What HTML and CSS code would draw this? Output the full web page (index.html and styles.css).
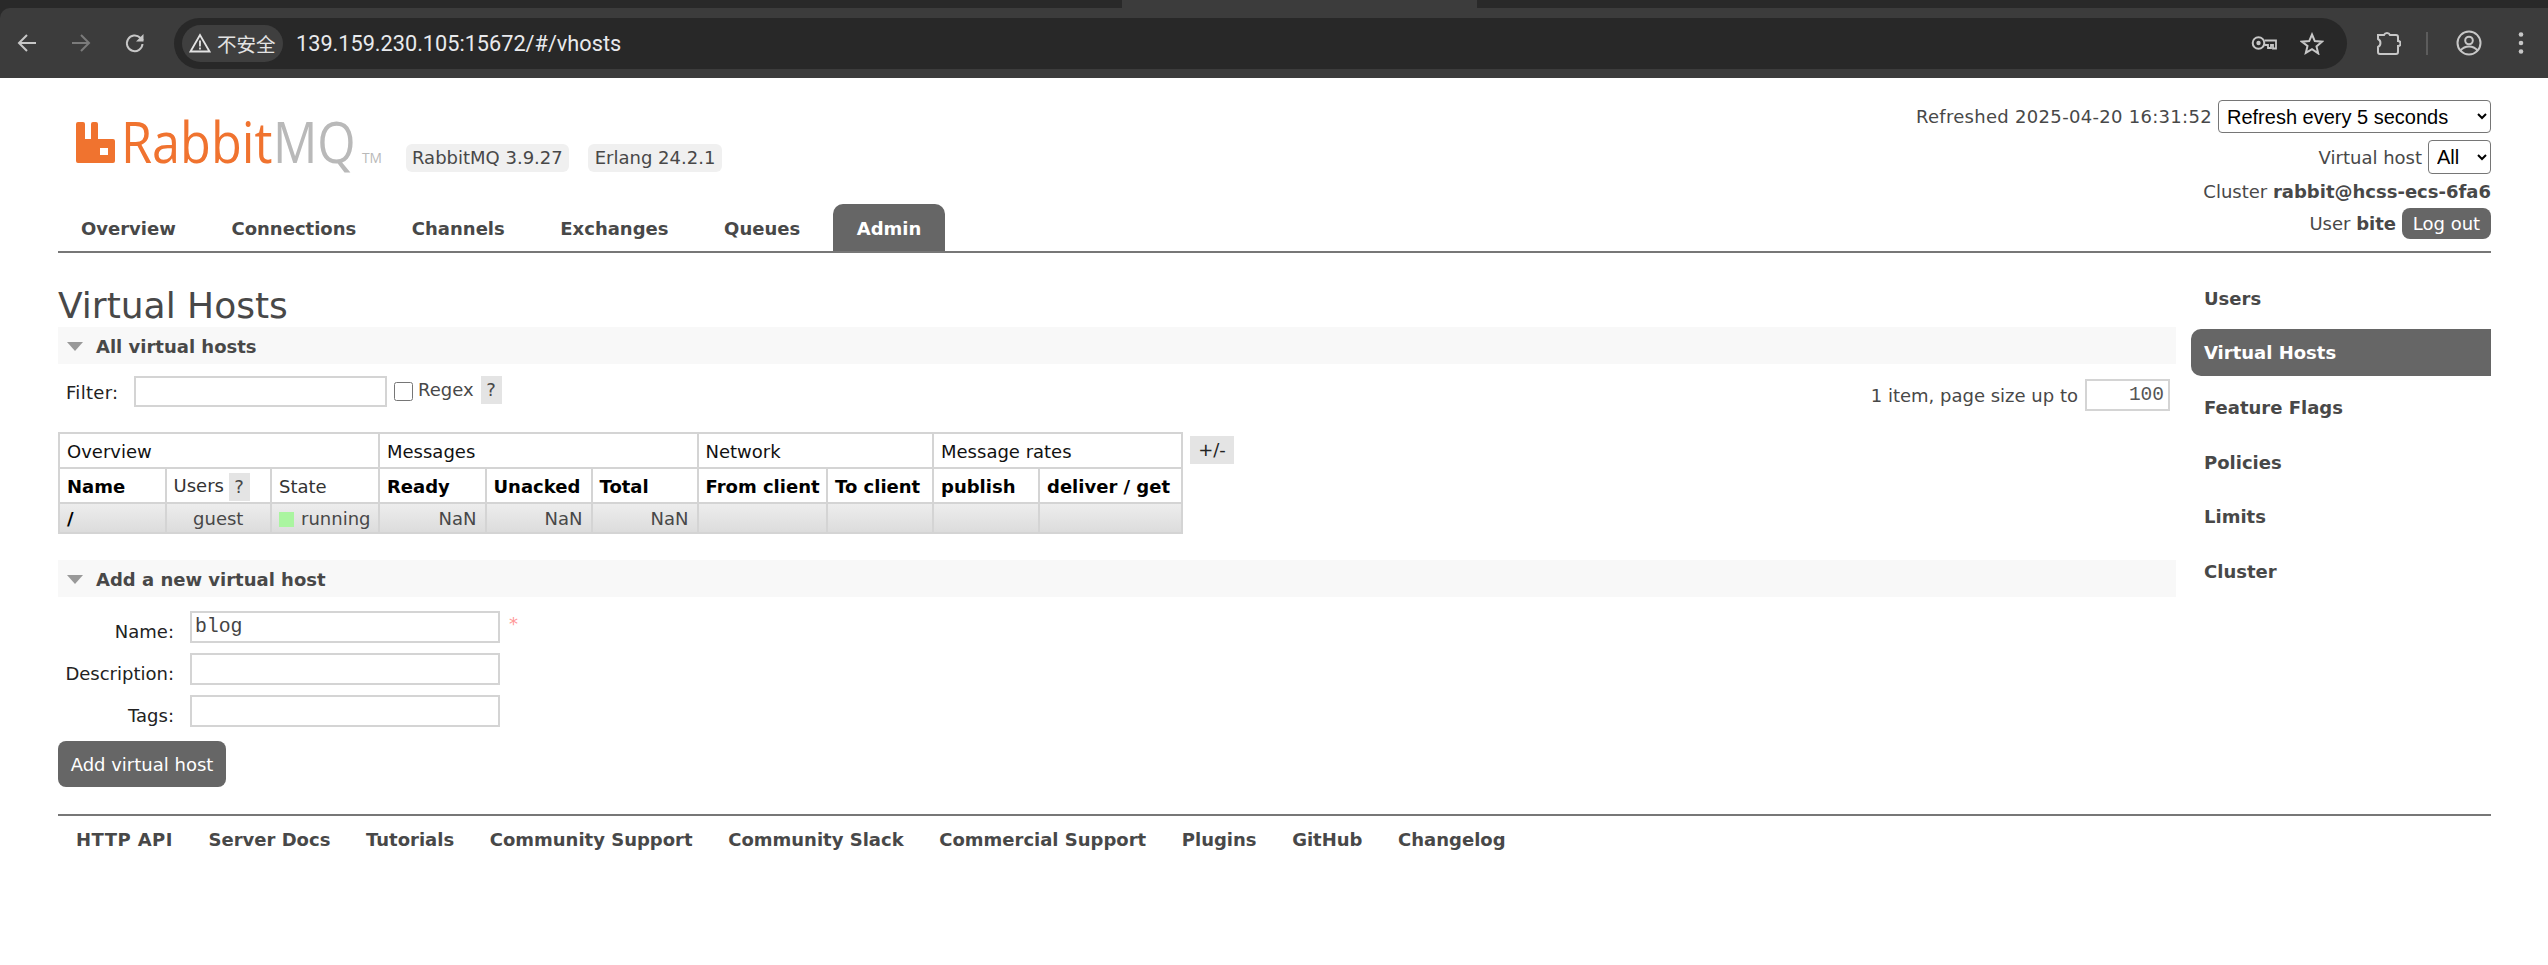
FILE: index.html
```
<!DOCTYPE html>
<html lang="en">
<head>
<meta charset="utf-8">
<title>RabbitMQ Management</title>
<link rel="stylesheet" href="styles.css">
</head>
<body>
<div class="chrome">
  <div class="strip"><span class="strip-tab"></span></div>
  <div class="toolbar">
    <svg class="ci" width="24" height="24" viewBox="0 0 24 24"><path d="M12 4 4 12l8 8M4.500 12H21" fill="none" stroke="#c7c7c7" stroke-width="2"/></svg>
    <svg class="ci ci-fwd" width="24" height="24" viewBox="0 0 24 24"><path d="M12 4l8 8-8 8M19.500 12H3" fill="none" stroke="#7b7b7b" stroke-width="2"/></svg>
    <svg class="ci ci-rel" width="24" height="24" viewBox="0 0 24 24"><path d="M19.500 13a7.800 7.800 0 1 1-2.300-6.200L20 9.500" fill="none" stroke="#c7c7c7" stroke-width="2"/><path d="M20.500 3v7.500H13z" fill="#c7c7c7"/></svg>
    <div class="omni">
      <div class="chip">
        <svg width="22" height="20" viewBox="0 0 22 20"><path d="M11 2 1.500 18.500h19z" fill="none" stroke="#e3e3e3" stroke-width="1.800"/><path d="M11 7.500v6M11 14.500v2" stroke="#e3e3e3" stroke-width="1.800"/></svg>
        <span class="chip-text">不安全</span>
      </div>
      <span class="url">139.159.230.105:15672/#/vhosts</span>
      <svg class="o-key" width="26" height="16" viewBox="0 0 26 16"><circle cx="7.500" cy="8" r="5.800" fill="none" stroke="#c7c7c7" stroke-width="2"/><circle cx="7.500" cy="8" r="2.200" fill="#c7c7c7"/><path d="M13.500 5.500H25v8h-3V10h-2v3h-3v-3h-3.500" fill="none" stroke="#c7c7c7" stroke-width="1.800"/></svg>
      <svg class="o-star" width="24" height="23" viewBox="0 0 24 23"><path d="M12 2.500l2.800 6.600 7.200.6-5.500 4.700 1.700 7L12 17.200l-6.200 3.700 1.700-7L2 9.700l7.200-.6z" fill="none" stroke="#c7c7c7" stroke-width="2"/></svg>
    </div>
    <svg class="t-puzzle" width="26" height="26" viewBox="0 0 26 26"><path d="M3 5h6a3.300 3.300 0 0 1 6 0h6a2 2 0 0 1 2 2v4a2.500 2.500 0 0 1 0 5v6a2 2 0 0 1-2 2H5a2 2 0 0 1-2-2v-5a4.500 4.500 0 0 0 0-8z" fill="none" stroke="#c7c7c7" stroke-width="2"/></svg>
    <span class="t-sep"></span>
    <svg class="t-prof" width="26" height="26" viewBox="0 0 26 26"><circle cx="13" cy="13" r="11.500" fill="none" stroke="#c7c7c7" stroke-width="2"/><circle cx="13" cy="10.500" r="3.800" fill="none" stroke="#c7c7c7" stroke-width="2"/><path d="M4.500 20.500c2.500-3 5.500-4 8.500-4s6 1 8.500 4" fill="none" stroke="#c7c7c7" stroke-width="2"/></svg>
    <svg class="t-dots" width="6" height="24" viewBox="0 0 6 24"><circle cx="3" cy="3.500" r="2.300" fill="#c7c7c7"/><circle cx="3" cy="12" r="2.300" fill="#c7c7c7"/><circle cx="3" cy="20.500" r="2.300" fill="#c7c7c7"/></svg>
  </div>
</div>

<div class="page">
  <header class="head">
    <div class="head-left">
      <div class="brand">
        <svg class="logo" width="310" height="84" viewBox="0 -23 310 84">
          <path d="M0 3a2 2 0 0 1 2-2h5a2 2 0 0 1 2 2v15h6V3a2 2 0 0 1 2-2h3a2 2 0 0 1 2 2v15h15a2 2 0 0 1 2 2v20a2 2 0 0 1-2 2H2a2 2 0 0 1-2-2zM24 27v7h8v-7z" fill="#f0732f" fill-rule="evenodd"/>
          <text class="logo-rabbit" transform="translate(45 42) scale(.9 1)">Rabbit</text>
          <text class="logo-mq" transform="translate(197 42) scale(.88 1)">MQ</text>
          <text class="logo-tm" transform="translate(286 42) scale(.92 1)">TM</text>
        </svg>
        <span class="badge badge-a">RabbitMQ 3.9.27</span>
        <span class="badge badge-b">Erlang 24.2.1</span>
      </div>
      <nav class="tabs">
        <a class="tab">Overview</a>
        <a class="tab">Connections</a>
        <a class="tab">Channels</a>
        <a class="tab">Exchanges</a>
        <a class="tab">Queues</a>
        <a class="tab tab-on">Admin</a>
      </nav>
    </div>
    <div class="head-right">
      <div class="hr-row hr-refresh"><span class="refreshed">Refreshed 2025-04-20 16:31:52</span><select class="sel sel-refresh"><option>Refresh every 5 seconds</option></select></div>
      <div class="hr-row hr-vhost"><span>Virtual host</span><select class="sel sel-vhost"><option>All</option></select></div>
      <div class="hr-row hr-cluster"><span>Cluster <b>rabbit@hcss-ecs-6fa6</b></span></div>
      <div class="hr-row hr-user"><span>User <b>bite</b></span><button class="logout">Log out</button></div>
    </div>
  </header>

  <div class="main">
    <div class="content">
      <h1>Virtual Hosts</h1>
      <h2 class="sec"><span class="tri"></span>All virtual hosts</h2>
      <div class="filter">
        <label class="f-label">Filter:</label>
        <input class="f-input" type="text">
        <input class="f-check" type="checkbox">
        <span class="f-regex">Regex</span>
        <span class="help">?</span>
        <span class="pager">1 item, page size up to</span>
        <input class="page-size" type="text" value="100">
      </div>
      <div class="table-row">
        <table class="list">
          <colgroup>
            <col class="c1"><col class="c2"><col class="c3"><col class="c4"><col class="c5"><col class="c6"><col class="c7"><col class="c8"><col class="c9"><col class="c10">
          </colgroup>
          <tr class="r-group">
            <th colspan="3">Overview</th>
            <th colspan="3">Messages</th>
            <th colspan="2">Network</th>
            <th colspan="2">Message rates</th>
          </tr>
          <tr class="r-head">
            <th>Name</th>
            <th class="plain">Users <span class="help help-sm">?</span></th>
            <th class="plain">State</th>
            <th>Ready</th>
            <th>Unacked</th>
            <th>Total</th>
            <th>From client</th>
            <th>To client</th>
            <th>publish</th>
            <th>deliver / get</th>
          </tr>
          <tr class="r-data">
            <td class="d-name">/</td>
            <td class="d-c">guest</td>
            <td class="d-state"><span class="dot"></span>running</td>
            <td class="d-r">NaN</td>
            <td class="d-r">NaN</td>
            <td class="d-r">NaN</td>
            <td></td><td></td><td></td><td></td>
          </tr>
        </table>
        <span class="plusminus">+/-</span>
      </div>
      <h2 class="sec sec-add"><span class="tri"></span>Add a new virtual host</h2>
      <form class="form">
        <div class="f-row"><label>Name:</label><input class="t-in" type="text" value="blog"><span class="req">*</span></div>
        <div class="f-row"><label>Description:</label><input class="t-in" type="text"></div>
        <div class="f-row"><label>Tags:</label><input class="t-in" type="text"></div>
        <button class="add" type="button">Add virtual host</button>
      </form>
    </div>
    <nav class="side">
      <a class="side-item">Users</a>
      <a class="side-item side-on">Virtual Hosts</a>
      <a class="side-item">Feature Flags</a>
      <a class="side-item">Policies</a>
      <a class="side-item">Limits</a>
      <a class="side-item">Cluster</a>
    </nav>
  </div>

  <footer class="foot">
    <a class="foot-api">HTTP API</a><a>Server Docs</a><a>Tutorials</a><a>Community Support</a><a>Community Slack</a><a>Commercial Support</a><a>Plugins</a><a>GitHub</a><a>Changelog</a>
  </footer>
</div>
</body>
</html>
```
FILE: styles.css
```
* { box-sizing: border-box; }
html, body { margin: 0; padding: 0; background: #fff; }
body { font-family: "DejaVu Sans", Verdana, sans-serif; font-size: 18px; color: #484848; overflow: hidden; width: 2548px; height: 965px; }

/* browser chrome */
.chrome { height: 78px; background: #292929; }
.strip { height: 8px; padding-left: 1122px; }
.strip-tab { display: block; width: 355px; height: 8px; background: #3c3c3c; }
.toolbar { height: 70px; background: #3c3c3c; border-top-left-radius: 10px; display: flex; align-items: center; padding-left: 15px; }
.ci { flex: none; }
.ci-fwd { margin-left: 30px; }
.ci-rel { margin-left: 30px; }
.omni { width: 2173px; margin-left: 27px; height: 51px; border-radius: 26px; background: #282828; display: flex; align-items: center; padding-left: 8px; }
.chip { width: 101px; height: 37px; border-radius: 19px; background: #3f3f3f; display: flex; align-items: center; padding-left: 7px; gap: 6px; }
.chip-text { font-family: "Noto Sans CJK SC", sans-serif; font-size: 19.500px; color: #e3e3e3; white-space: nowrap; }
.url { margin-left: 13px; font-family: Roboto, "Open Sans", sans-serif; font-size: 21.700px; color: #e8eaed; white-space: nowrap; }
.o-key { margin-left: auto; }
.o-star { margin-left: 23px; margin-right: 23px; }
.t-puzzle { margin-left: 28px; }
.t-sep { width: 2px; height: 23px; background: #5c5c5c; margin-left: 25px; }
.t-prof { margin-left: 28px; }
.t-dots { margin-left: 36px; }

/* page */
.page { padding: 0 57px 0 58px; }
.head { height: 175px; border-bottom: 2px solid #777; display: flex; justify-content: space-between; }
.head-left { display: flex; flex-direction: column; justify-content: space-between; }
.brand { display: flex; align-items: flex-start; padding: 20px 0 0 18px; }
.logo { flex: none; display: block; }
.logo-rabbit { font-family: "Open Sans", sans-serif; font-weight: 400; font-size: 56px; fill: #f0732f; }
.logo-mq { font-family: "Open Sans", sans-serif; font-weight: 400; font-size: 56px; fill: #b9b9b9; }
.logo-tm { font-family: "Open Sans", sans-serif; font-size: 15px; fill: #b9b9b9; }
.badge { background: #f0f0f0; border-radius: 6px; height: 28px; line-height: 28px; padding: 0 6px; font-size: 18px; white-space: nowrap; margin-top: 46px; }
.badge-a { margin-left: 20px; }
.badge-b { margin-left: 19px; padding: 0 7px; }
.tabs { display: flex; gap: 9.600px; }
.tab { display: block; height: 47px; line-height: 49px; padding: 0 23px; font-weight: 700; font-size: 18px; color: #484848; }
.tab-on { background: #666; color: #fff; border-radius: 10px 10px 0 0; padding: 0 24px; }

.head-right { padding-top: 22px; }
.hr-row { display: flex; justify-content: flex-end; align-items: center; gap: 6px; white-space: nowrap; font-size: 18px; }
.refreshed { letter-spacing: .3px; }
.hr-refresh { height: 33px; }
.hr-vhost { height: 34px; margin-top: 7px; }
.hr-cluster { margin-top: 6px; height: 22px; }
.hr-user { margin-top: 6px; height: 31px; }
.sel { font-family: "Liberation Sans", Arial, sans-serif; font-size: 20px; height: 100%; background: #fff; color: #000; border: 1px solid #767676; border-radius: 4px; padding: 0 4px; }
.sel-refresh { width: 273px; }
.sel-vhost { width: 63px; }
.logout { width: 89px; height: 31px; border: 0; border-radius: 8px; background: #666; color: #fff; font-family: "DejaVu Sans", sans-serif; font-size: 18px; padding: 0; }

.main { display: flex; gap: 15px; height: 561px; }
.content { width: 2118px; padding-top: 32px; }
h1 { margin: 0; font-size: 36px; font-weight: 400; line-height: 42px; color: #484848; }
.sec { margin: 0; height: 37px; padding-top: 1px; background: #f8f8f8; font-size: 18px; font-weight: 700; color: #484848; display: flex; align-items: center; padding-left: 9px; gap: 13px; }
.sec-add { margin-top: 26px; }
.tri { width: 0; height: 0; border: 8.500px solid transparent; border-top: 9px solid #999; border-bottom: 0; }

.filter { display: flex; align-items: flex-start; height: 68px; padding-top: 12px; padding-left: 8px; }
.f-label { color: #222; line-height: 33px; width: 68px; letter-spacing: .3px; }
.f-input { width: 253px; height: 31px; border: 2px solid #d4d4d4; background: #fff; }
.f-check { width: 19px; height: 19px; margin: 6px 5px 0 7px; }
.f-regex { line-height: 28px; }
.help { width: 21px; height: 28px; line-height: 28px; margin-left: 7px; background: #e4e4e4; text-align: center; font-size: 18px; }
.pager { margin-left: auto; line-height: 33px; margin-right: 7px; margin-top: 3px; }
.page-size { width: 85px; height: 32px; margin-top: 3px; margin-right: 6px; border: 2px solid #d4d4d4; text-align: right; font-family: "Liberation Mono", monospace; font-size: 19.500px; color: #555; padding: 0 4px; }

.table-row { display: flex; align-items: flex-start; gap: 7px; }
.list { border-collapse: collapse; table-layout: fixed; width: 1123px; font-size: 18px; color: #111; }
.list th, .list td { border: 2px solid #d4d4d4; padding: 2px 0 0 7px; text-align: left; white-space: nowrap; overflow: hidden; }
.c1 { width: 106.500px; } .c2 { width: 105.500px; } .c3 { width: 108px; } .c4 { width: 106.500px; } .c5 { width: 106px; }
.c6 { width: 106px; } .c7 { width: 129.500px; } .c8 { width: 106px; } .c9 { width: 106px; } .c10 { width: 143px; }
.r-group { height: 35px; }
.r-group th { font-weight: 400; }
.r-head { height: 35px; }
.r-head th { font-weight: 700; color: #000; }
.r-head th.plain { font-weight: 400; color: #333; }
.help-sm { display: inline-block; height: 28px; vertical-align: middle; margin-left: -1px; color: #484848; }
.r-data { height: 30px; }
.r-data td { background: linear-gradient(#ededed, #dcdcdc); color: #484848; line-height: 26px; }
.d-name { font-weight: 700; color: #000 !important; }
.d-c { text-align: center !important; padding: 2px 0 0 !important; }
.dot { display: inline-block; width: 15px; height: 15px; background: #aaf5a0; margin-right: 7px; vertical-align: -2px; }
.list td.d-r { text-align: right; padding: 2px 8px 0 0; }
.plusminus { width: 44px; height: 28px; margin-top: 4px; line-height: 28px; text-align: center; background: #e4e4e4; color: #222; }

.form { padding-top: 14px; }
.f-row { display: flex; align-items: flex-start; height: 42px; }
.f-row label { width: 116px; text-align: right; color: #222; line-height: 42px; }
.t-in { margin-left: 16px; width: 310px; height: 32px; border: 2px solid #d4d4d4; background: #fff; font-family: "Liberation Mono", monospace; font-size: 19.800px; padding: 0 3px 1px; color: #444; }
.req { margin-left: 9px; color: #f99; line-height: 26px; }
.add { display: block; margin-top: 4px; width: 168px; height: 46px; border: 0; border-radius: 8px; background: #666; color: #fff; font-family: "DejaVu Sans", sans-serif; font-size: 18px; padding: 0; }

.side { width: 300px; padding-top: 21.500px; display: flex; flex-direction: column; gap: 7.700px; }
.side-item { display: block; height: 47px; line-height: 47px; padding-left: 13px; font-weight: 700; color: #484848; }
.side-on { background: #666; color: #fff; border-radius: 10px 0 0 10px; }

.foot { border-top: 2px solid #777; display: flex; gap: 35.600px; padding: 13px 0 0 18px; font-weight: 700; color: #484848; }
.foot-api { letter-spacing: .45px; }
```
